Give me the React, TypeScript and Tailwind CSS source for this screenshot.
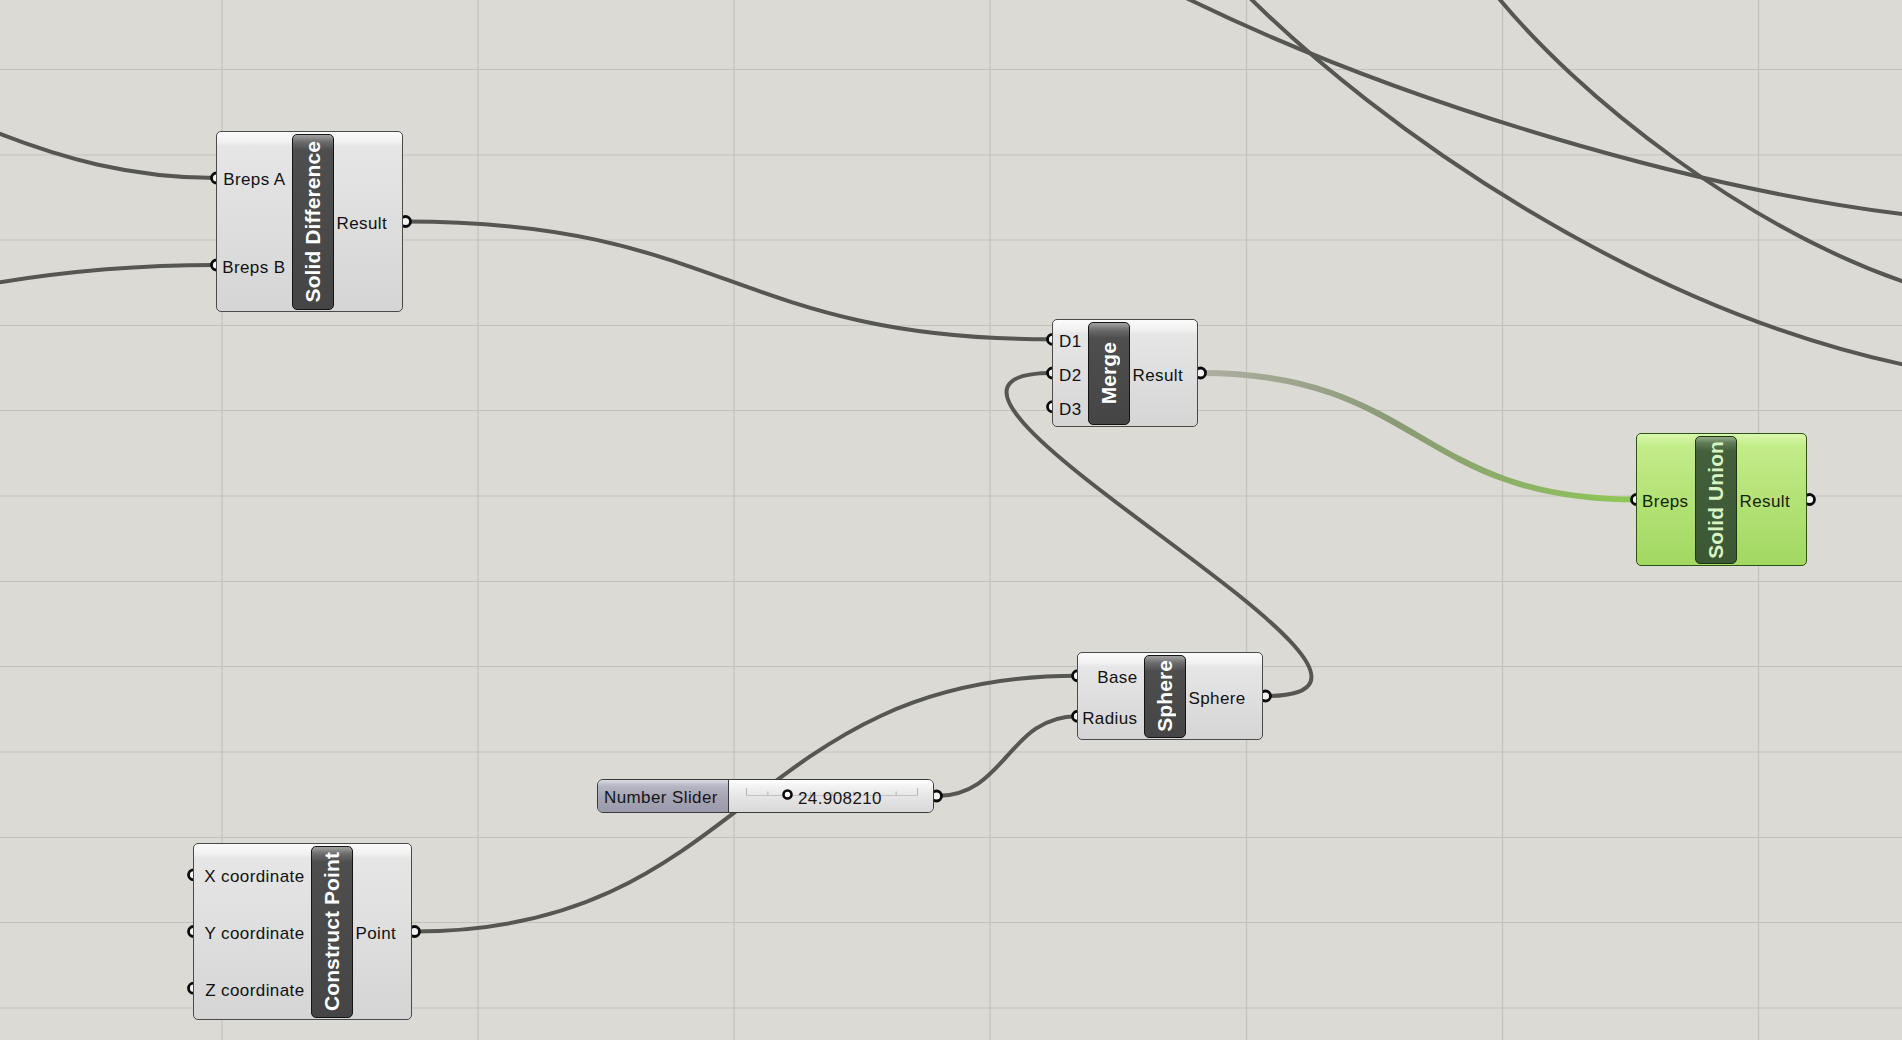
import React from 'react';

type Pt = { x: number; y: number };

type NodeDef = {
  id: string;
  x: number;
  y: number;
  w: number;
  h: number;
  pos: string;
  inCls: string;
  outCls: string;
  title: string;
  inputs: string[];
  outputs: string[];
  green?: boolean;
};

const nodes: NodeDef[] = [
  {
    id: 'diff',
    x: 216, y: 131, w: 187, h: 181,
    pos: 'left-[216px] top-[131px] w-[187px] h-[181px]',
    inCls: 'w-[74.5px]', outCls: 'w-[67.5px]',
    title: 'Solid Difference',
    inputs: ['Breps A', 'Breps B'],
    outputs: ['Result'],
  },
  {
    id: 'merge',
    x: 1052, y: 319, w: 146, h: 108,
    pos: 'left-[1052px] top-[319px] w-[146px] h-[108px]',
    inCls: 'w-[34.5px]', outCls: 'w-[66.5px]',
    title: 'Merge',
    inputs: ['D1', 'D2', 'D3'],
    outputs: ['Result'],
  },
  {
    id: 'union',
    x: 1636, y: 433, w: 171, h: 133,
    pos: 'left-[1636px] top-[433px] w-[171px] h-[133px]',
    inCls: 'w-[57.5px]', outCls: 'w-[68.5px]',
    title: 'Solid Union',
    inputs: ['Breps'],
    outputs: ['Result'],
    green: true,
  },
  {
    id: 'sphere',
    x: 1077, y: 652, w: 186, h: 88,
    pos: 'left-[1077px] top-[652px] w-[186px] h-[88px]',
    inCls: 'w-[65.5px]', outCls: 'w-[75.5px]',
    title: 'Sphere',
    inputs: ['Base', 'Radius'],
    outputs: ['Sphere'],
  },
  {
    id: 'pt',
    x: 193, y: 843, w: 219, h: 177,
    pos: 'left-[193px] top-[843px] w-[219px] h-[177px]',
    inCls: 'w-[116.5px]', outCls: 'w-[57.5px]',
    title: 'Construct Point',
    inputs: ['X coordinate', 'Y coordinate', 'Z coordinate'],
    outputs: ['Point'],
  },
];

const byId = (id: string) => nodes.find((n) => n.id === id)!;

// port centres follow the flex rows inside the node (border 1.5 + py 2)
const rowY = (n: NodeDef, i: number, count: number) =>
  n.y + 3.5 + ((i + 0.5) * (n.h - 7)) / count;
const inPort = (id: string, i: number): Pt => {
  const n = byId(id);
  return { x: n.x + 0.5, y: rowY(n, i, n.inputs.length) };
};
const outPort = (id: string, i: number): Pt => {
  const n = byId(id);
  return { x: n.x + n.w + 2.5, y: rowY(n, i, n.outputs.length) };
};

const sliderOut: Pt = { x: 936.5, y: 796 };

const wire = (a: Pt, b: Pt, k: number) =>
  `M ${a.x} ${a.y} C ${a.x + k} ${a.y}, ${b.x - k} ${b.y}, ${b.x} ${b.y}`;

const gridX = [222, 478, 734, 990, 1246.5, 1502.5, 1758.5];
const gridY = [69.5, 155, 240, 325.5, 410.5, 496, 581.5, 666.5, 752, 837.5, 922.5, 1008];

const Canvas = () => {
  const greenFrom = outPort('merge', 0);
  const greenTo = inPort('union', 0);
  const ports: Pt[] = [
    ...nodes.flatMap((n) => [
      ...n.inputs.map((_, i) => inPort(n.id, i)),
      ...n.outputs.map((_, i) => outPort(n.id, i)),
    ]),
    sliderOut,
  ];

  return (
    <svg className="absolute inset-0" width={1902} height={1040}>
      <defs>
        <linearGradient id="gw" gradientUnits="userSpaceOnUse" x1={greenFrom.x} y1={0} x2={greenTo.x} y2={0}>
          <stop offset="0" stopColor="#aeaea2" />
          <stop offset="0.45" stopColor="#8a9a76" />
          <stop offset="1" stopColor="#8fc856" />
        </linearGradient>
      </defs>
      {gridX.map((x) => (
        <line key={`x${x}`} x1={x} y1={0} x2={x} y2={1040} stroke="#c4c2bc" strokeWidth={1.2} />
      ))}
      {gridY.map((y) => (
        <line key={`y${y}`} x1={0} y1={y} x2={1902} y2={y} stroke="#c4c2bc" strokeWidth={1.2} />
      ))}

      <g fill="none" stroke="#565652" strokeWidth={4}>
        <path d={`M -10 130 C 60 158, 130 ${inPort('diff', 0).y}, ${inPort('diff', 0).x} ${inPort('diff', 0).y}`} />
        <path d={`M -10 284 C 70 270, 140 ${inPort('diff', 1).y}, ${inPort('diff', 1).x} ${inPort('diff', 1).y}`} />
        <path d={wire(outPort('diff', 0), inPort('merge', 0), 320)} />
        <path d={wire(outPort('sphere', 0), inPort('merge', 1), 220)} />
        <path d={wire(outPort('pt', 0), inPort('sphere', 0), 330)} />
        <path d={wire(sliderOut, inPort('sphere', 1), 70)} />
        <path d="M 1170 -10 C 1400 105, 1700 190, 1910 215" />
        <path d="M 1240 -12 C 1380 130, 1640 310, 1910 366" />
        <path d="M 1492 -10 C 1580 100, 1750 230, 1910 284" />
      </g>
      <path d={wire(greenFrom, greenTo, 220)} fill="none" stroke="url(#gw)" strokeWidth={6} />

      {ports.map((p, i) => (
        <circle key={i} cx={p.x} cy={p.y} r={5} fill="#f4f4f4" stroke="#0a0a0a" strokeWidth={2.8} />
      ))}
    </svg>
  );
};

const Node = ({ n }: { n: NodeDef }) => {
  const g = n.green;
  return (
    <div
      className={`absolute flex rounded-[5px] border-[1.5px] ${n.pos} ${
        g
          ? 'border-[#2d5416] bg-[linear-gradient(to_bottom,#d9f7ae_0px,#c3ec8a_12px,#b4e276_50%,#a2d862_100%)] text-[#13220a]'
          : 'border-[#4a4a4a] bg-[linear-gradient(to_bottom,#fbfbfb_0px,#f1f1f1_10px,#e6e6e6_14px,#d5d5d5_100%)] text-[#111]'
      }`}
    >
      <div className={`flex shrink-0 flex-col py-[2px] ${n.inCls}`}>
        {n.inputs.map((l) => (
          <div key={l} className="flex flex-1 items-center justify-end whitespace-nowrap pr-[6px] pt-[4px] leading-none">
            {l}
          </div>
        ))}
      </div>
      <div
        className={`my-[1.5px] flex w-[42px] shrink-0 items-center justify-center rounded-[5px] border-[1.5px] ${
          g
            ? 'border-[#1d3312] bg-[linear-gradient(to_bottom,#93ad88_0px,#5f7c56_6px,#43603b_14px,#3b5734_100%)] text-[#d8f4c2]'
            : 'border-[#141414] bg-[linear-gradient(to_bottom,#a2a2a2_0px,#6c6c6c_7px,#4e4e4e_15px,#454545_100%)] text-white'
        }`}
      >
        <span className="rotate-180 whitespace-nowrap text-[21px] font-bold leading-none tracking-[0.1px] [writing-mode:vertical-rl]">
          {n.title}
        </span>
      </div>
      <div className={`flex shrink-0 flex-col py-[2px] ${n.outCls}`}>
        {n.outputs.map((l) => (
          <div key={l} className="flex flex-1 items-center whitespace-nowrap pl-[3px] pt-[4px] leading-none">
            {l}
          </div>
        ))}
      </div>
    </div>
  );
};

const Slider = () => {
  const ticks = Array.from({ length: 9 }, (_, i) => 17.5 + i * 21.375);
  return (
    <div className="absolute left-[597px] top-[779px] flex h-[34px] w-[337px] overflow-hidden rounded-[6px] border-[1.5px] border-[#3a3a3a] text-[#161616]">
      <div className="flex w-[131px] shrink-0 items-center border-r-[1.5px] border-[#3a3a3a] bg-[linear-gradient(to_bottom,#dcdce4_0px,#b6b6c4_6px,#a6a6b6_50%,#9a9aab_100%)] pl-[6px] pt-[3px] leading-none">
        Number Slider
      </div>
      <div className="relative flex flex-1 items-center bg-[linear-gradient(to_bottom,#ffffff_0px,#f3f3f3_6px,#e6e6e6_50%,#d9d9d9_100%)] pl-[69px] leading-none">
        <svg className="absolute inset-0" width={203} height={31}>
          <line x1={17.5} y1={15.5} x2={188.5} y2={15.5} stroke="#c2c2c2" strokeWidth={1} />
          {ticks.map((x, i) => (
            <line
              key={i}
              x1={x}
              y1={i === 0 || i === ticks.length - 1 ? 8 : 11.5}
              x2={x}
              y2={15.5}
              stroke="#b4b4b4"
              strokeWidth={1}
            />
          ))}
          <circle cx={58.5} cy={14.5} r={4} fill="#fafafa" stroke="#0a0a0a" strokeWidth={2.6} />
        </svg>
        <span className="relative pt-[4px]">24.908210</span>
      </div>
    </div>
  );
};

export default function App() {
  return (
    <div className="relative h-[1040px] w-[1902px] overflow-hidden bg-[#dcdad4] font-['Liberation_Sans',Arial,sans-serif] text-[17px] tracking-[0.4px]">
      <Canvas />
      {nodes.map((n) => (
        <Node key={n.id} n={n} />
      ))}
      <Slider />
    </div>
  );
}
